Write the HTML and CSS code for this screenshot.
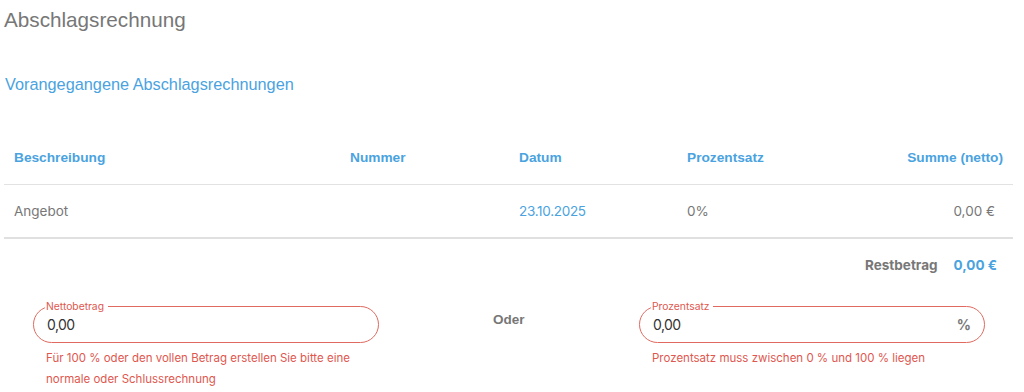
FILE: index.html
```html
<!DOCTYPE html>
<html lang="de">

<head>
    <meta charset="UTF-8">
    <meta name="viewport" content="width=device-width, initial-scale=1.0">
    <title>Abschlagsrechnung</title>
    <link rel="stylesheet" href="styles.css">
</head>

<body>
    <div class="page">
        <h1 class="title">Abschlagsrechnung</h1>

        <h2 class="subtitle">Vorangegangene Abschlagsrechnungen</h2>

        <div class="table">
            <div class="row head">
                <div class="cell">Beschreibung</div>
                <div class="cell">Nummer</div>
                <div class="cell">Datum</div>
                <div class="cell">Prozentsatz</div>
                <div class="cell right">Summe (netto)</div>
            </div>
            <div class="row body">
                <div class="cell">Angebot</div>
                <div class="cell"></div>
                <div class="cell link">23.10.2025</div>
                <div class="cell">0%</div>
                <div class="cell right sum">0,00 €</div>
            </div>
        </div>

        <div class="rest">
            <span class="rest-label">Restbetrag</span>
            <span class="rest-value">0,00 €</span>
        </div>

        <div class="fields">
            <div class="field">
                <fieldset class="box">
                    <legend>Nettobetrag</legend>
                    <input type="text" value="0,00">
                </fieldset>
                <p class="error">Für 100 % oder den vollen Betrag erstellen Sie bitte eine normale oder Schlussrechnung</p>
            </div>

            <div class="or">Oder</div>

            <div class="field">
                <fieldset class="box">
                    <legend>Prozentsatz</legend>
                    <input type="text" value="0,00">
                    <span class="unit">%</span>
                </fieldset>
                <p class="error">Prozentsatz muss zwischen 0 % und 100 % liegen</p>
            </div>
        </div>
    </div>
</body>

</html>
```

FILE: styles.css
```css
body {
    margin: 0;
    background: #fff;
    font-family: "Inter", "Liberation Sans", sans-serif;
}

.page {
    padding: 0 11px 0 4px;
}

.title {
    margin: 0;
    padding-top: 7px;
    font-family: "Liberation Sans", Arial, sans-serif;
    font-weight: normal;
    font-size: 20.7px;
    line-height: 26px;
    color: #777;
}

.subtitle {
    margin: 0;
    padding-top: 41px;
    padding-left: 1px;
    font-family: "Liberation Sans", Arial, sans-serif;
    font-weight: normal;
    font-size: 16.3px;
    line-height: 20px;
    color: #4aa3df;
}

.table {
    margin-top: 47px;
}

.row {
    display: grid;
    grid-template-columns: 336px 169px 168px 168px 1fr;
    align-items: center;
}

.head {
    align-items: start;
    box-sizing: border-box;
    height: 44px;
    padding-top: 9px;
    border-bottom: 1px solid #e2e2e2;
    font-family: "Liberation Sans", Arial, sans-serif;
    font-weight: bold;
    font-size: 13.7px;
    line-height: 16px;
    color: #4aa3df;
}

.body {
    height: 52px;
    border-bottom: 2px solid #e0e0e0;
    font-size: 13.5px;
    color: #777;
}

.cell {
    padding-left: 10px;
}

.right {
    text-align: right;
    padding-right: 10px;
}

.sum {
    padding-right: 18px;
}

.link {
    color: #4aa3df;
    letter-spacing: -0.3px;
}

.rest {
    display: flex;
    justify-content: flex-end;
    gap: 16px;
    padding: 18px 16px 0 0;
    font-size: 13.5px;
    font-weight: bold;
    line-height: 16px;
}

.rest-label {
    color: #777;
}

.rest-value {
    color: #4aa3df;
}

.fields {
    display: flex;
    align-items: flex-start;
    margin-top: 28px;
    padding-left: 29px;
}

.field {
    width: 346px;
}

.box {
    display: flex;
    align-items: center;
    height: 42px;
    margin: 0;
    padding: 0 13px 0 12px;
    border: 1px solid #e06a60;
    border-radius: 19px;
    box-sizing: border-box;
}

.box legend {
    margin-left: -1px;
    padding: 0 4px 0 1px;
    font-size: 10.3px;
    line-height: 10px;
    color: #e0574f;
}

.box input {
    flex: 1;
    min-width: 0;
    border: none;
    outline: none;
    padding: 0 0 0 1px;
    margin-top: -4px;
    font-family: "Inter", "Liberation Sans", sans-serif;
    font-size: 14px;
    letter-spacing: -0.6px;
    color: #333;
    background: transparent;
}

.unit {
    margin-top: -4px;
    font-size: 14px;
    font-weight: bold;
    color: #777;
}

.error {
    margin: 5px 0 0 13px;
    font-size: 11.5px;
    line-height: 21px;
    color: #e0574f;
}

.or {
    width: 260px;
    padding-top: 11px;
    padding-left: 114px;
    box-sizing: border-box;
    font-family: "Liberation Sans", Arial, sans-serif;
    font-size: 13.5px;
    font-weight: bold;
    color: #777;
}
```
